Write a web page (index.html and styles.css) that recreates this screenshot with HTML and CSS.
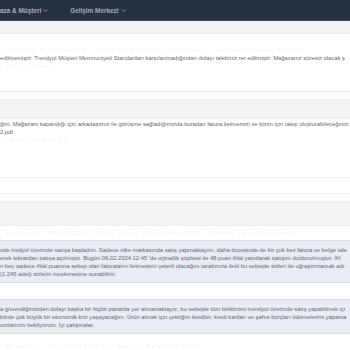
FILE: index.html
```html
<!DOCTYPE html>
<html lang="tr">
<head>
    <meta charset="UTF-8">
    <meta name="viewport" content="width=device-width, initial-scale=1.0">
    <title>Talep Detayı</title>
    <link rel="stylesheet" href="styles.css">
</head>
<body>
    <nav class="topbar">
        <span class="nav-item">aza &amp; Müşteri <svg class="chev" viewBox="0 0 10 6"><path d="M1 1l4 4 4-4" /></svg></span>
        <span class="nav-item">Gelişim Merkezi <svg class="chev" viewBox="0 0 10 6"><path d="M1 1l4 4 4-4" /></svg></span>
    </nav>
    <div class="subbar"></div>

    <main class="content">
        <div class="answer">
            <p class="faint">Trendyol Satıcı Destek · 05.02.2024 10:14 · Talep Yanıtı · Mağaza Kapatma Bildirimi</p>
            <p class="line">edilmemiştir. Trendyol Müşteri Memnuniyeti Standartları karşılanmadığından dolayı talebiniz ret edilmiştir. Mağazanız süresiz olacak ş</p>
            <p class="faint">Satıcı Destek</p>
        </div>

        <div class="band"></div>

        <div class="message">
            <p class="line">ğim. Mağazam kapandığı için arkadaşımız ile görüşme sağladığımızda buradan fatura iletmemizi ve bizim için talep oluşturabileceğinizi b</p>
            <p class="line">2.pdf</p>
            <p class="faint">06.02.2024 14:02</p>
        </div>

        <div class="row"></div>
        <div class="band tall"></div>
        <p class="faint label">Mesajınız · 06.02.2024 15:30 · Satıcı · Talep No 48215 · Durum: Yanıt Bekleniyor</p>

        <div class="box">
            <p class="line">nde tredyol üzerinde satışa başladım. Sadece nike markasında satış yapmaktayım, daha öncesinde de bir çok kez fatura ve belge tale</p>
            <p class="line">erek tekrardan satışa açılmıştır. Bugün 06.02.2024 12:45 'de orjinallik şüphesi ile 48 puan ihlal yanıtlarak satışım durdurulmuştur. İhl</p>
            <p class="line">n bey sadece ihlal puanına sebep olan faturaların iletmesinin yeterli olacağını tarafımıza iletti bu sebeple sizleri de uğraştırmamak adı</p>
            <p class="line">(1.245 adet) sizlerin incelemesine sunabiliriz.</p>
        </div>

        <div class="gap"></div>

        <div class="box">
            <p class="line">a güvendiğimizden dolayı başka bir hiçbir pazarda yer almamaktayız, bu sebeple tüm birikimimi trendyol üzerinde satış yapabilmek içi</p>
            <p class="line">ktirde çok büyük bir ekonomik kriz yaşayacağım. Ürün almak için çektiğim krediler, kredi kartları ve şahıs borçları ödemelerimi yapama</p>
            <p class="line">umlarınızı bekliyorum. İyi çalışmalar.</p>
        </div>

        <p class="faint bottom">Mesajınız · 06.02.2024 15:41 · Satıcı · Talep No 48215</p>
    </main>
</body>
</html>
```

FILE: styles.css
```css
body {
  margin: 0;
  padding: 0;
  width: 350px;
  overflow: hidden;
  font-family: "Liberation Sans", Arial, sans-serif;
  background-color: #ffffff;
}

p {
  margin: 0;
}

.topbar {
  height: 20px;
  background-color: #283142;
  border-bottom: 1px solid #3b4454;
  display: flex;
  align-items: center;
  gap: 22px;
}

.nav-item {
  font-size: 6.4px;
  font-weight: bold;
  color: #a3adbf;
  white-space: nowrap;
  display: flex;
  align-items: center;
  gap: 2px;
}

.chev {
  width: 5px;
  height: 3px;
  fill: none;
  stroke: #a3adbf;
  stroke-width: 1.6;
}

.subbar {
  height: 12px;
  background-color: #f4f5f7;
  border-bottom: 1px solid #e6e8ec;
}

.content {
  font-size: 5.85px;
  color: #646973;
}

.line {
  white-space: nowrap;
  overflow: hidden;
  line-height: 8px;
}

.faint {
  white-space: nowrap;
  overflow: hidden;
  line-height: 8px;
  color: #f3f3f5;
  padding-left: 6px;
  letter-spacing: 1px;
}

.answer {
  padding-top: 12px;
  height: 45px;
  border-bottom: 1px solid #eeeff2;
}

.band {
  height: 18px;
  margin-top: 7px;
  background-color: #f3f4f6;
  border-top: 1px solid #eceef1;
  border-bottom: 1px solid #eceef1;
}

.message {
  padding-top: 1px;
  height: 57px;
}

.row {
  height: 15px;
  border-top: 1px solid #eceef1;
  border-bottom: 1px solid #eceef1;
}

.band.tall {
  height: 23px;
  margin-top: 7px;
}

.label {
  padding-top: 3px;
  height: 11px;
}

.box {
  background-color: #eaecf3;
  border-top: 1px solid #d9dce4;
  border-bottom: 1px solid #d9dce4;
  padding: 5px 0 4px;
}

.gap {
  height: 16px;
}

.bottom {
  margin-top: 8px;
}
```
